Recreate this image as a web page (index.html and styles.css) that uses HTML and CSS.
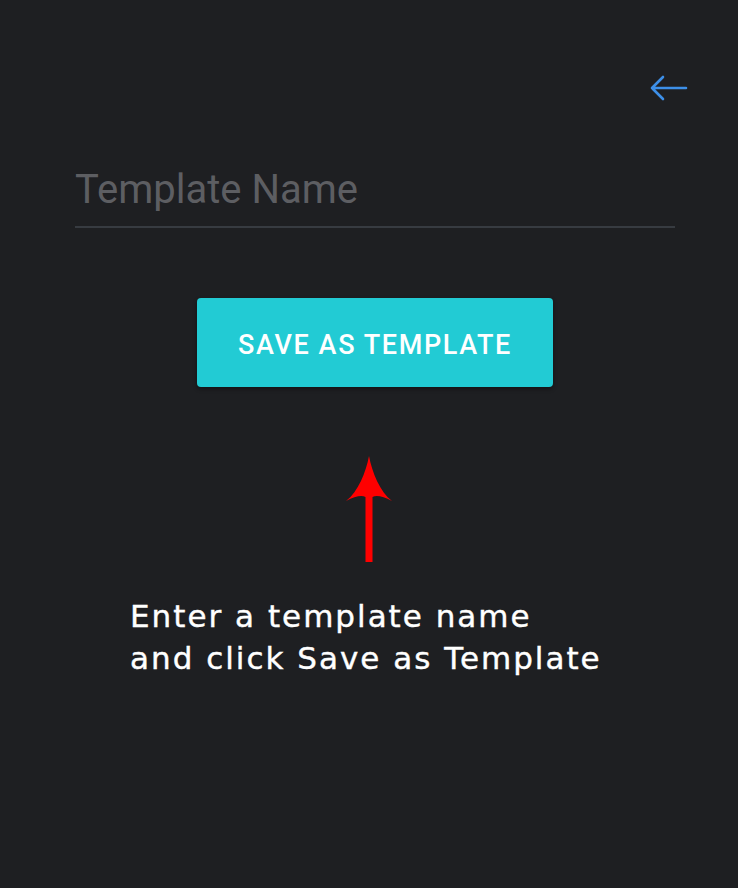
FILE: index.html
```html
<!DOCTYPE html>
<html>
	<head>
		<meta charset="utf-8" />
		<title>Save as Template</title>
		<link rel="stylesheet" href="styles.css">
	</head>
	<body>
		<div class="page">
			<div class="topbar">
				<a href="javascript:;" class="back">
					<svg width="40" height="28" viewBox="0 0 40 28">
						<path d="M3 14H37M14 3L3 14L14 25" fill="none" stroke="#3d8fe8" stroke-width="2.6" stroke-linecap="round" stroke-linejoin="round"/>
					</svg>
				</a>
			</div>
			<div class="field">
				<input type="text" class="name" placeholder="Template Name">
			</div>
			<div class="actions">
				<button class="save">SAVE AS TEMPLATE</button>
			</div>
			<div class="hint">
				<svg class="pointer" width="48" height="108" viewBox="0 0 48 108">
					<path d="M24 0C27 16 35 36 47 45C38 40 31 39 27.5 41V106H20.5V41C17 39 10 40 1 45C13 36 21 16 24 0Z" fill="#ff0000"/>
				</svg>
				<p class="note">Enter a template name<br>and click Save as Template</p>
			</div>
		</div>
	</body>
</html>
```

FILE: styles.css
```css
*{
	margin: 0;
	padding: 0;
	box-sizing: border-box;
}
html, body{
	background: #1e1f22;
	height: 100%;
}
body{
	font-family: Roboto, "Liberation Sans", sans-serif;
}
.page{
	padding: 0 52px 0 75px;
}
.topbar{
	display: flex;
	justify-content: flex-end;
	padding-top: 74px;
}
.back{
	display: block;
	width: 40px;
	height: 28px;
	margin-right: -3px;
}
.field{
	margin-top: 62px;
	width: 600px;
}
.name{
	width: 100%;
	background: transparent;
	border: none;
	border-bottom: 2px solid #373b41;
	outline: none;
	font-family: Roboto, "Liberation Sans", sans-serif;
	font-size: 40px;
	color: #ddd;
	padding: 0 0 12px 0;
	height: 64px;
}
.name::placeholder{
	color: #5d5e62;
}
.actions{
	display: flex;
	justify-content: center;
	width: 600px;
	margin-top: 70px;
}
.save{
	width: 356px;
	height: 89px;
	padding-top: 5px;
	background: #22cbd4;
	color: #fff;
	border: none;
	border-radius: 4px;
	font-family: Roboto, "Liberation Sans", sans-serif;
	font-weight: 500;
	font-size: 27px;
	letter-spacing: 1.6px;
	box-shadow: 0 2px 4px rgba(0,0,0,0.4);
	cursor: pointer;
}
.hint{
	display: flex;
	flex-direction: column;
	align-items: flex-start;
	margin-top: 69px;
}
.pointer{
	margin-left: 270px;
}
.note{
	margin-top: 31px;
	margin-left: 55px;
	font-family: "DejaVu Sans", "Open Sans", sans-serif;
	font-size: 31px;
	line-height: 42px;
	letter-spacing: 2px;
	-webkit-text-stroke: 0.4px #fff;
	color: #fff;
}
```
